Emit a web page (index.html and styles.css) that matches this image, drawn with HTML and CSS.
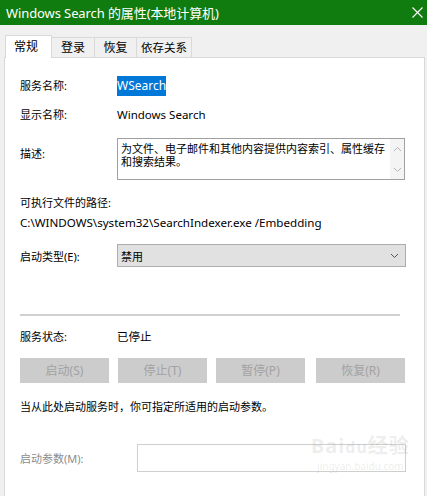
FILE: index.html
```html
<!doctype html>
<html lang="zh-CN">
  <head>
    <meta charset="UTF-8" />
    <title>Windows Search 的属性(本地计算机)</title>
    <link rel="stylesheet" href="styles.css">
  </head>
  <body>
    <div class="window">
      <div class="titlebar">
        <span class="title">Windows Search 的属性(本地计算机)</span>
        <svg class="close" width="11" height="11" viewBox="0 0 11 11">
          <path d="M0.5 0.5 L10.5 10.5 M10.5 0.5 L0.5 10.5" stroke="#fff" stroke-width="1.1" fill="none" />
        </svg>
      </div>

      <div class="body">
        <div class="tabs">
          <div class="tab active">常规</div>
          <div class="tab">登录</div>
          <div class="tab">恢复</div>
          <div class="tab">依存关系</div>
        </div>

        <div class="panel">
          <div class="row row-name">
            <span class="label">服务名称:</span>
            <span class="value"><span class="selected">WSearch</span></span>
          </div>

          <div class="row row-display">
            <span class="label">显示名称:</span>
            <span class="value">Windows Search</span>
          </div>

          <div class="row row-desc">
            <span class="label label-desc">描述:</span>
            <div class="desc-box">
              <div class="desc-text">为文件、电子邮件和其他内容提供内容索引、属性缓存和搜索结果。</div>
              <div class="scrollbar">
                <svg width="9" height="6" viewBox="0 0 9 6"><path d="M1 5 L4.5 1.5 L8 5" stroke="#b4b4b4" fill="none" /></svg>
                <svg width="9" height="6" viewBox="0 0 9 6"><path d="M1 1 L4.5 4.5 L8 1" stroke="#b4b4b4" fill="none" /></svg>
              </div>
            </div>
          </div>

          <div class="path-label">可执行文件的路径:</div>
          <div class="path">C:\WINDOWS\system32\SearchIndexer.exe /Embedding</div>

          <div class="row row-type">
            <span class="label">启动类型(E):</span>
            <div class="select">
              <span>禁用</span>
              <svg width="9" height="6" viewBox="0 0 9 6"><path d="M1 1 L4.5 4.5 L8 1" stroke="#555" fill="none" /></svg>
            </div>
          </div>

          <div class="separator"></div>

          <div class="row row-status">
            <span class="label">服务状态:</span>
            <span class="value">已停止</span>
          </div>

          <div class="buttons">
            <div class="btn">启动(S)</div>
            <div class="btn">停止(T)</div>
            <div class="btn">暂停(P)</div>
            <div class="btn">恢复(R)</div>
          </div>

          <div class="hint">当从此处启动服务时，你可指定所适用的启动参数。</div>

          <div class="row row-param">
            <span class="label label-param">启动参数(M):</span>
            <div class="param-input"></div>
          </div>

          <div class="watermark">
            <span class="wm-logo">Bai<span class="wm-du">du</span>经验</span>
            <span class="wm-url">jingyan.baidu.com</span>
          </div>
        </div>
      </div>
    </div>
  </body>
</html>
```

FILE: styles.css
```css
html,
body {
  margin: 0;
  padding: 0;
}
body {
  width: 427px;
  height: 496px;
  overflow: hidden;
  font-family: 'Noto Sans', 'Noto Sans CJK SC', sans-serif;
  font-size: 11px;
  color: #000;
  background-color: #f0f0f0;
}
.titlebar {
  height: 25px;
  background-color: #107c10;
  color: #fff;
  display: flex;
  align-items: center;
  justify-content: space-between;
  padding: 0 0 0 6px;
}
.title {
  font-size: 13px;
  letter-spacing: -0.1px;
}
.close {
  margin-right: 4px;
}
.body {
  padding: 10px 2px 0 4px;
}
.tabs {
  display: flex;
  align-items: flex-end;
  height: 22px;
  padding-left: 1px;
  position: relative;
  z-index: 1;
}
.tab {
  height: 20px;
  line-height: 20px;
  padding: 0 4px;
  font-size: 12px;
  text-align: center;
  white-space: nowrap;
  background-color: #f0f0f0;
  border: 1px solid #d9d9d9;
  border-bottom: none;
  margin-right: -1px;
  box-sizing: border-box;
}
.tab:nth-child(2) {
  width: 44px;
}
.tab:nth-child(3) {
  width: 43px;
}
.tab:nth-child(4) {
  width: 56px;
  font-size: 11.5px;
}
.tab.active {
  height: 23px;
  width: 47px;
  background-color: #fff;
  margin-bottom: -1px;
  line-height: 22px;
  text-align: left;
  padding-left: 8px;
}
.panel {
  position: relative;
  height: 440px;
  background-color: #fff;
  border: 1px solid #d9d9d9;
  padding: 0 18px 0 15px;
}
.row {
  display: flex;
  align-items: center;
}
.label {
  width: 97px;
  flex-shrink: 0;
}
.row-name {
  height: 20px;
  margin-top: 17px;
}
.selected {
  background-color: #0078d7;
  color: #fff;
  padding: 1px 0 2px;
  font-size: 12px;
}
.row-display {
  height: 20px;
  margin-top: 9px;
}
.value {
  font-size: 11.5px;
}
.row-desc {
  align-items: flex-start;
  margin-top: 14px;
}
.label-desc {
  padding-top: 7px;
}
.desc-box {
  display: flex;
  width: 288px;
  height: 42px;
  border: 1px solid #a0a0a0;
  box-sizing: border-box;
}
.desc-text {
  flex: 1;
  padding: 3px 0 0 3px;
  line-height: 13px;
  font-size: 11px;
}
.scrollbar {
  width: 14px;
  background-color: #f4f4f4;
  display: flex;
  flex-direction: column;
  justify-content: space-between;
  align-items: center;
  padding: 7px 0 6px;
}
.path-label {
  height: 16px;
  line-height: 16px;
  margin-top: 15px;
}
.path {
  height: 16px;
  line-height: 16px;
  margin-top: 4px;
  font-size: 11.6px;
}
.row-type {
  margin-top: 13px;
}
.select {
  width: 289px;
  height: 23px;
  box-sizing: border-box;
  border: 1px solid #adadad;
  background-color: #e1e1e1;
  display: flex;
  align-items: center;
  justify-content: space-between;
  padding: 0 6px 0 3px;
}
.separator {
  height: 2px;
  width: 380px;
  background-color: #d0d0d0;
  margin-top: 47px;
}
.row-status {
  height: 20px;
  margin-top: 10px;
}
.buttons {
  display: flex;
  gap: 9px;
  margin-top: 12px;
}
.btn {
  width: 89px;
  height: 25px;
  line-height: 25px;
  text-align: center;
  background-color: #cccccc;
  color: #a2a2a2;
  font-size: 12px;
}
.btn:nth-child(4) {
  margin-left: 2px;
}
.hint {
  height: 16px;
  line-height: 16px;
  margin-top: 16px;
}
.row-param {
  margin-top: 29px;
}
.label-param {
  width: 117px;
  color: #8c8c8c;
}
.param-input {
  width: 269px;
  height: 28px;
  box-sizing: border-box;
  border: 1px solid #cfcfcf;
}
.watermark {
  position: absolute;
  left: 306px;
  top: 372px;
  display: flex;
  flex-direction: column;
  align-items: center;
  color: rgba(150, 150, 150, 0.18);
}
.wm-logo {
  font-size: 20px;
  font-weight: bold;
  letter-spacing: 1px;
}
.wm-du {
  font-size: 16px;
}
.wm-url {
  font-size: 10px;
}
```
